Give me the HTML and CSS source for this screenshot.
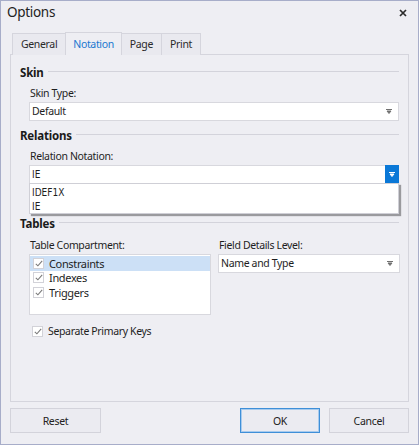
FILE: index.html
```html
<!DOCTYPE html>
<html>
<head>
<meta charset="utf-8">
<link rel="stylesheet" href="styles.css">
</head>
<body>
<div class="window">
  <div class="titlebar">
    <span class="title">Options</span>
    <svg class="close" width="8" height="8" viewBox="0 0 8 8"><path d="M1 1 L7 7 M7 1 L1 7" stroke="#2b2b2b" stroke-width="1.7"/></svg>
  </div>
  <div class="tabs">
    <div class="tab">General</div>
    <div class="tab active">Notation</div>
    <div class="tab">Page</div>
    <div class="tab">Print</div>
  </div>
  <div class="panel">
    <div class="group-header"><span>Skin</span><i class="rule"></i></div>
    <div class="field">
      <div class="label">Skin Type:</div>
      <div class="combo"><span>Default</span><svg class="arrow" width="6" height="5" viewBox="0 0 6 5"><path d="M0 0.5 H6 M1 2 H5 L3 4.5 Z" stroke="#707070" fill="#707070" stroke-width="1"/></svg></div>
    </div>
    <div class="group-header g2"><span>Relations</span><i class="rule"></i></div>
    <div class="field">
      <div class="label">Relation Notation:</div>
      <div class="combo open"><span class="tah">IE</span>
        <div class="dd-btn"><svg width="6" height="5" viewBox="0 0 6 5"><path d="M0 0.5 H6 M1 2 H5 L3 4.5 Z" stroke="#fff" fill="#fff" stroke-width="1"/></svg></div>
        <div class="popup">
          <div class="opt">IDEF1X</div>
          <div class="opt">IE</div>
        </div>
      </div>
    </div>
    <div class="group-header g3"><span>Tables</span><i class="rule"></i></div>
    <div class="cols">
      <div class="col">
        <div class="label">Table Compartment:</div>
        <div class="listbox">
          <div class="row sel"><i class="cb"><svg width="8" height="7" viewBox="0 0 8 7"><path d="M0.8 3.8 L2.9 5.8 L7.2 0.8" stroke="#7a7a7a" fill="none" stroke-width="1.1"/></svg></i>Constraints</div>
          <div class="row"><i class="cb"><svg width="8" height="7" viewBox="0 0 8 7"><path d="M0.8 3.8 L2.9 5.8 L7.2 0.8" stroke="#7a7a7a" fill="none" stroke-width="1.1"/></svg></i>Indexes</div>
          <div class="row"><i class="cb"><svg width="8" height="7" viewBox="0 0 8 7"><path d="M0.8 3.8 L2.9 5.8 L7.2 0.8" stroke="#7a7a7a" fill="none" stroke-width="1.1"/></svg></i>Triggers</div>
        </div>
      </div>
      <div class="col">
        <div class="label">Field Details Level:</div>
        <div class="combo"><span>Name and Type</span><svg class="arrow" width="6" height="5" viewBox="0 0 6 5"><path d="M0 0.5 H6 M1 2 H5 L3 4.5 Z" stroke="#707070" fill="#707070" stroke-width="1"/></svg></div>
      </div>
    </div>
    <div class="check"><i class="cb"><svg width="8" height="7" viewBox="0 0 8 7"><path d="M0.8 3.8 L2.9 5.8 L7.2 0.8" stroke="#7a7a7a" fill="none" stroke-width="1.1"/></svg></i>Separate Primary Keys</div>
  </div>
  <div class="buttons">
    <button class="btn reset">Reset</button>
    <span class="spacer"></span>
    <button class="btn ok">OK</button>
    <button class="btn">Cancel</button>
  </div>
</div>
</body>
</html>
```
FILE: styles.css
```css
html, body {
  margin: 0;
  padding: 0;
  background: #eeeef3;
}
body {
  font-family: "Noto Sans", "Open Sans", sans-serif;
  font-size: 10.5px;
  letter-spacing: -0.35px;
  color: #1e1e1e;
}
.window {
  width: 419px;
  height: 445px;
  box-sizing: border-box;
  border: 1px solid #a7adc9;
  background: #eeeef3;
  display: flex;
  flex-direction: column;
  position: relative;
}
.titlebar {
  height: 31px;
  display: flex;
  align-items: flex-start;
  justify-content: space-between;
  padding: 0 11px 0 6px;
}
.title {
  font-size: 13.5px;
  letter-spacing: -0.3px;
  line-height: 22px;
  color: #222;
}
.close {
  margin-top: 8px;
}
.tabs {
  display: flex;
  margin-left: 11px;
  height: 23px;
  position: relative;
  z-index: 2;
}
.tab {
  border: 1px solid #d5d5dd;
  border-bottom: none;
  background: #e9e9ef;
  color: #2a2a2a;
  padding: 0 8px;
  line-height: 21px;
  height: 22px;
  margin-right: -1px;
  box-sizing: border-box;
  margin-top: 1px;
}
.tab.active {
  background: #eeeef3;
  color: #1a78d0;
  height: 23px;
  margin-top: 0;
  padding: 1px 7px 0 7px;
}
.panel {
  margin: -1px 9px 0 9px;
  border: 1px solid #d5d5dd;
  height: 348px;
  box-sizing: border-box;
  padding: 9px 9px 0 9px;
  position: relative;
}
.group-header {
  display: flex;
  align-items: center;
  height: 16px;
  font-weight: bold;
  font-size: 11.5px;
  letter-spacing: -0.2px;
  color: #1a1a1a;
}
.group-header .rule {
  flex: 1;
  height: 1px;
  background: #d3d3db;
  margin-left: 4px;
  margin-top: -1px;
}
.g2 { margin-top: 6px; }
.g3 { margin-top: 31px; }
.field, .cols, .check {
  margin-left: 9px;
}
.label {
  height: 14px;
  line-height: 14px;
  margin-top: 6px;
  margin-bottom: 2px;
  padding-left: 1px;
}
.combo {
  height: 19px;
  box-sizing: border-box;
  border: 1px solid #d8d8de;
  background: #fff;
  display: flex;
  align-items: center;
  justify-content: space-between;
  padding: 0 6px 0 2px;
  position: relative;
}
.combo span {
  line-height: 17px;
}
.tah, .opt {
  font-family: "DejaVu Sans Condensed", "DejaVu Sans", sans-serif;
  font-size: 10px;
  letter-spacing: 0;
}
.combo.open {
  padding-right: 0;
}
.dd-btn {
  width: 14px;
  height: 19px;
  margin-top: -1px;
  margin-bottom: -1px;
  margin-right: -1px;
  background: #0a78d7;
  display: flex;
  align-items: center;
  justify-content: center;
}
.popup {
  position: absolute;
  left: -1px;
  right: -1px;
  top: 17px;
  height: 31px;
  box-sizing: border-box;
  background: #fff;
  border: 1px solid #cfcfd6;
  box-shadow: 2px 2px 1px #9a9a9e;
  padding: 2px 0 0 2px;
  z-index: 5;
}
.opt {
  line-height: 13.5px;
}
.cols {
  display: grid;
  grid-template-columns: 182px 182px;
  column-gap: 7px;
}
.cols .label {
  margin-top: 7px;
}
.listbox {
  height: 61px;
  box-sizing: border-box;
  border: 1px solid #d8d8de;
  background: #fff;
  padding: 1px 0 0 0;
}
.row {
  height: 14.5px;
  display: flex;
  align-items: center;
  padding-left: 3px;
  font-size: 11px;
}
.row.sel {
  background: #cce0f6;
}
.cb {
  width: 9px;
  height: 9px;
  border: 1px solid #d2d2d8;
  background: #fff;
  display: inline-flex;
  align-items: center;
  justify-content: center;
  margin-right: 5px;
}
.check {
  margin-top: 9px;
  display: flex;
  align-items: center;
  height: 14px;
  padding-left: 3px;
}
.buttons {
  display: flex;
  margin: 6px 9px 0 9px;
}
.spacer { flex: 1; }
.btn {
  width: 80px;
  height: 25px;
  box-sizing: border-box;
  border: 1px solid #d3d3db;
  background: #ebebf1;
  font-family: "Noto Sans", "Open Sans", sans-serif;
  font-size: 10.5px;
  letter-spacing: -0.3px;
  color: #222;
  padding: 0;
  margin-left: 9px;
}
.btn.reset {
  width: 91px;
  margin-left: 0;
}
.btn.ok {
  border: 1px solid #3f8fd8;
  box-shadow: inset 0 0 0 1px #a8cbee;
}
```
